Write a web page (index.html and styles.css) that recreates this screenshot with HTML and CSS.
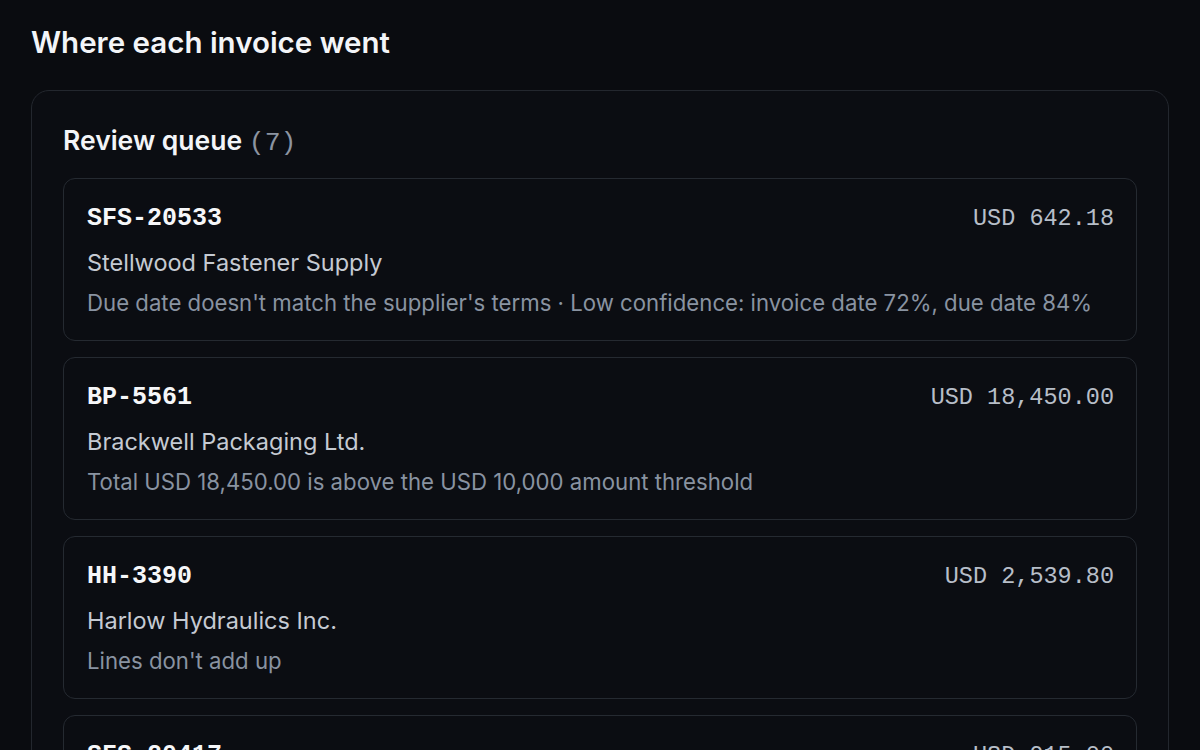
FILE: index.html
```html
<!doctype html>
<html lang="en">
  <head>
    <meta charset="utf-8">
    <title>Where each invoice went</title>
    <link rel="stylesheet" href="styles.css">
  </head>
  <body>
    <h1 class="page-title">Where each invoice went</h1>

    <section class="panel">
      <h2 class="panel-title">Review queue <span class="count">(7)</span></h2>

      <ul class="queue">
        <li class="invoice">
          <div class="invoice-head">
            <span class="invoice-id">SFS-20533</span>
            <span class="invoice-total">USD 642.18</span>
          </div>
          <div class="supplier">Stellwood Fastener Supply</div>
          <div class="reason">Due date doesn't match the supplier's terms · Low confidence: invoice date 72%, due date 84%</div>
        </li>
        <li class="invoice">
          <div class="invoice-head">
            <span class="invoice-id">BP-5561</span>
            <span class="invoice-total">USD 18,450.00</span>
          </div>
          <div class="supplier">Brackwell Packaging Ltd.</div>
          <div class="reason">Total USD 18,450.00 is above the USD 10,000 amount threshold</div>
        </li>
        <li class="invoice">
          <div class="invoice-head">
            <span class="invoice-id">HH-3390</span>
            <span class="invoice-total">USD 2,539.80</span>
          </div>
          <div class="supplier">Harlow Hydraulics Inc.</div>
          <div class="reason">Lines don't add up</div>
        </li>
        <li class="invoice">
          <div class="invoice-head">
            <span class="invoice-id">SFS-20417</span>
            <span class="invoice-total">USD 915.00</span>
          </div>
          <div class="supplier">Stellwood Fastener Supply</div>
          <div class="reason">Low confidence: total 68%</div>
        </li>
      </ul>
    </section>
  </body>
</html>
```

FILE: styles.css
```css
body {
  margin: 0;
  padding: 23px 31px 40px;
  background: #0a0c10;
  color: #f3f5f8;
  font-family: Inter, "Noto Sans", sans-serif;
}
.page-title {
  margin: 0 0 29px;
  font-size: 29.5px;
  line-height: 38px;
  font-weight: 600;
}
.panel {
  border: 1px solid #23272e;
  border-radius: 18px;
  background: #0b0d12;
  padding: 33px 31px 31px;
}
.panel-title {
  margin: 0 0 19px;
  font-size: 26.5px;
  line-height: 32px;
  font-weight: 600;
}
.count {
  font-family: "Liberation Mono", monospace;
  font-weight: 400;
  color: #8c94a1;
}
.queue {
  list-style: none;
  margin: 0;
  padding: 0;
  display: flex;
  flex-direction: column;
  gap: 16px;
}
.invoice {
  border: 1px solid #252a31;
  border-radius: 12px;
  background: #0b0d12;
  padding: 24px 22px 23px 23px;
}
.invoice-head {
  display: flex;
  justify-content: space-between;
  align-items: baseline;
}
.invoice-id {
  font-family: "Liberation Mono", monospace;
  font-weight: 700;
  font-size: 25px;
  line-height: 32px;
  color: #f6f7f9;
}
.invoice-total {
  font-family: "Liberation Mono", monospace;
  font-size: 23.5px;
  line-height: 32px;
  color: #b7bec8;
}
.supplier {
  margin-top: 13px;
  font-size: 23.5px;
  line-height: 30px;
  color: #c5cad2;
}
.reason {
  margin-top: 11px;
  font-size: 22.2px;
  line-height: 28px;
  color: #8993a1;
}
```
